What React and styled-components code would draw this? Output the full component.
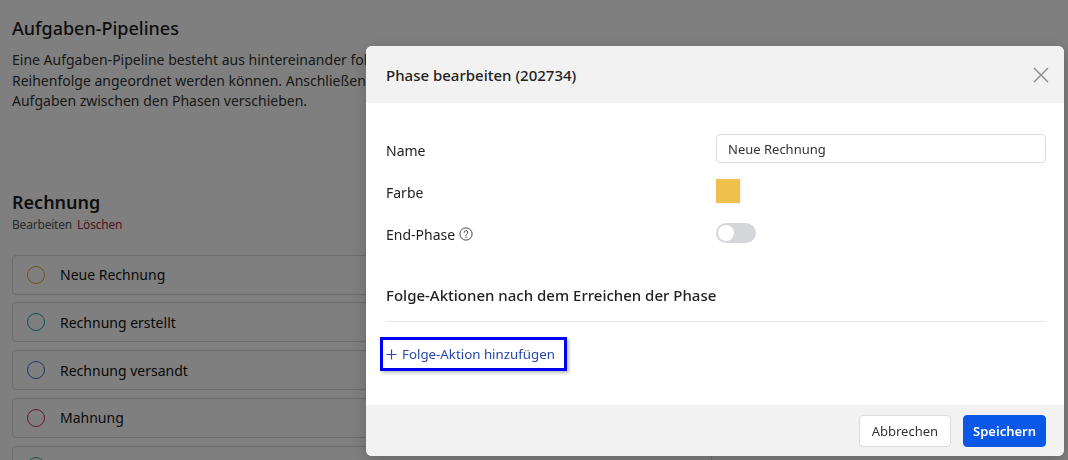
import React from 'react'
import styled, { createGlobalStyle } from 'styled-components'

const GlobalStyle = createGlobalStyle`
  html, body {
    margin: 0;
    padding: 0;
    height: 460px;
    overflow: hidden;
    background: #fff;
    font-family: "Noto Sans", "Open Sans", sans-serif;
    color: #222;
  }
  * { box-sizing: border-box; }
`

const phases = [
  { name: 'Neue Rechnung', color: '#e0a645' },
  { name: 'Rechnung erstellt', color: '#16a2a8' },
  { name: 'Rechnung versandt', color: '#3d6fd6' },
  { name: 'Mahnung', color: '#c93358' },
  { name: 'Bezahlt', color: '#2c9c78' },
]

const App = () => {
  return (
    <>
      <GlobalStyle />
      <Page>
        <Title>Aufgaben-Pipelines</Title>
        <Intro>
          Eine Aufgaben-Pipeline besteht aus hintereinander folgenden Phasen, die in beliebiger<br />
          Reihenfolge angeordnet werden können. Anschließend kann man die<br />
          Aufgaben zwischen den Phasen verschieben.
        </Intro>
        <PipelineTitle>Rechnung</PipelineTitle>
        <PipelineActions>
          <span>Bearbeiten</span>
          <span className="danger">Löschen</span>
        </PipelineActions>
        <PhaseList>
          {phases.map(p => (
            <PhaseItem key={p.name}>
              <Ring $color={p.color} />
              {p.name}
            </PhaseItem>
          ))}
        </PhaseList>
      </Page>

      <Overlay />

      <Modal>
        <ModalHeader>
          <h2>Phase bearbeiten (202734)</h2>
          <CloseButton aria-label="Schließen">
            <svg width="16" height="16" viewBox="0 0 16 16">
              <path d="M1 1L15 15M15 1L1 15" stroke="#8a8a8a" strokeWidth="1.4" fill="none" />
            </svg>
          </CloseButton>
        </ModalHeader>

        <ModalBody>
          <Form>
            <Label>Name</Label>
            <Input defaultValue="Neue Rechnung" />
            <Label>Farbe</Label>
            <Control><Swatch $color="#f0c04c" /></Control>
            <Label>
              End-Phase
              <svg width="14" height="14" viewBox="0 0 16 16">
                <circle cx="8" cy="8" r="7" fill="none" stroke="#444" strokeWidth="1.1" />
                <path d="M5.9 6.2a2.1 2.1 0 1 1 3 1.9c-.6.3-.9.7-.9 1.3v.4" fill="none" stroke="#444" strokeWidth="1.1" strokeLinecap="round" />
                <circle cx="8" cy="11.7" r=".75" fill="#444" />
              </svg>
            </Label>
            <Control><Toggle /></Control>
          </Form>

          <SectionTitle>Folge-Aktionen nach dem Erreichen der Phase</SectionTitle>
          <Divider />
          <AddLink>
            <svg width="11" height="11" viewBox="0 0 11 11">
              <path d="M5.5 0.5V10.5M0.5 5.5H10.5" stroke="#2647a8" strokeWidth="1.2" fill="none" />
            </svg>
            Folge-Aktion hinzufügen
          </AddLink>
        </ModalBody>

        <ModalFooter>
          <Button>Abbrechen</Button>
          <Button $primary>Speichern</Button>
        </ModalFooter>
      </Modal>
    </>
  )
}

const Page = styled.div`
  padding: 16px 12px 0;
`

const Title = styled.h1`
  margin: 0;
  font-size: 18px;
  line-height: 24px;
  font-weight: 500;
  color: #1d1d1d;
`

const Intro = styled.p`
  margin: 10px 0 0;
  font-size: 14px;
  line-height: 20.5px;
  color: #333;
  white-space: nowrap;
`

const PipelineTitle = styled.h2`
  margin: 78px 0 0;
  font-size: 18px;
  line-height: 24px;
  font-weight: 600;
  color: #1d1d1d;
`

const PipelineActions = styled.div`
  display: flex;
  gap: 5px;
  margin-top: 3px;
  font-size: 12px;
  line-height: 16px;
  color: #555;
  letter-spacing: -0.2px;

  .danger { color: #a3243a; }
`

const PhaseList = styled.div`
  display: flex;
  flex-direction: column;
  gap: 7.75px;
  margin-top: 22px;
  width: 700px;
`

const PhaseItem = styled.div`
  display: flex;
  align-items: center;
  gap: 15px;
  height: 40px;
  padding-left: 14px;
  border: 1px solid #d9d9d9;
  border-radius: 4px;
  background: #fff;
  font-size: 14px;
  color: #111;
`

const Ring = styled.span`
  width: 18px;
  height: 18px;
  border-radius: 50%;
  border: 1.5px solid ${p => p.$color};
  flex-shrink: 0;
`

const Overlay = styled.div`
  position: fixed;
  inset: 0;
  background: rgba(0, 0, 0, 0.5);
`

const Modal = styled.div`
  position: fixed;
  left: 366px;
  top: 46px;
  width: 698px;
  height: 410px;
  display: flex;
  flex-direction: column;
  background: #fff;
  border-radius: 6px;
  overflow: hidden;
  box-shadow: 0 4px 16px rgba(0, 0, 0, 0.2);
`

const ModalHeader = styled.div`
  display: flex;
  align-items: center;
  justify-content: space-between;
  height: 57px;
  padding: 0 15px 0 20px;
  background: #f2f2f2;

  h2 {
    margin: 0;
    font-size: 15px;
    font-weight: 500;
    color: #222;
  }
`

const CloseButton = styled.button`
  display: flex;
  padding: 0;
  border: 0;
  background: none;
  cursor: pointer;
`

const ModalBody = styled.div`
  flex: 1;
  padding: 31px 18px 0 20px;
`

const Form = styled.div`
  display: grid;
  grid-template-columns: 330px 1fr;
  grid-auto-rows: 29px;
  row-gap: 13px;
  align-items: center;
`

const Label = styled.div`
  display: flex;
  align-items: center;
  gap: 4px;
  font-size: 14px;
  color: #222;
  padding-top: 3px;
`

const Control = styled.div`
  display: flex;
  align-items: center;
`

const Input = styled.input`
  height: 29px;
  padding: 0 11px;
  border: 1px solid #dcdcdc;
  border-radius: 4px;
  font-family: inherit;
  font-size: 13px;
  color: #333;
  outline: none;
`

const Swatch = styled.span`
  width: 24px;
  height: 24px;
  background: ${p => p.$color};
  box-shadow: 1px 1px 3px rgba(0, 0, 0, 0.08);
`

const Toggle = styled.span`
  position: relative;
  width: 40px;
  height: 20px;
  border-radius: 10px;
  background: #d5d6d9;

  &::after {
    content: '';
    position: absolute;
    left: 2px;
    top: 2px;
    width: 16px;
    height: 16px;
    border-radius: 50%;
    background: #fff;
  }
`

const SectionTitle = styled.h3`
  margin: 38px 0 0;
  font-size: 15px;
  line-height: 20px;
  font-weight: 500;
  color: #222;
`

const Divider = styled.hr`
  margin: 16px 0 0;
  border: 0;
  border-top: 1px solid #e3e3e3;
`

const AddLink = styled.a`
  display: inline-flex;
  align-items: center;
  gap: 5px;
  margin: 15px 0 0 -6px;
  padding: 4px 9px 4px 3px;
  border: 3px solid #0000f5;
  box-shadow: 2px 2px 3px rgba(0, 0, 0, 0.25);
  font-size: 13.3px;
  line-height: 20px;
  color: #2647a8;
  cursor: pointer;
`

const ModalFooter = styled.div`
  display: flex;
  justify-content: flex-end;
  align-items: center;
  gap: 12px;
  height: 51px;
  padding: 0 18px;
  background: #f2f2f2;
`

const Button = styled.button`
  height: 32px;
  padding: ${p => (p.$primary ? '0 9px' : '0 12px')};
  border-radius: 4px;
  border: 1px solid ${p => (p.$primary ? '#0b57e8' : '#dcdcdc')};
  background: ${p => (p.$primary ? '#0b57e8' : '#fff')};
  color: ${p => (p.$primary ? '#fff' : '#333')};
  font-family: inherit;
  font-size: 13px;
  font-weight: ${p => (p.$primary ? 600 : 400)};
  cursor: pointer;
`

export default App
